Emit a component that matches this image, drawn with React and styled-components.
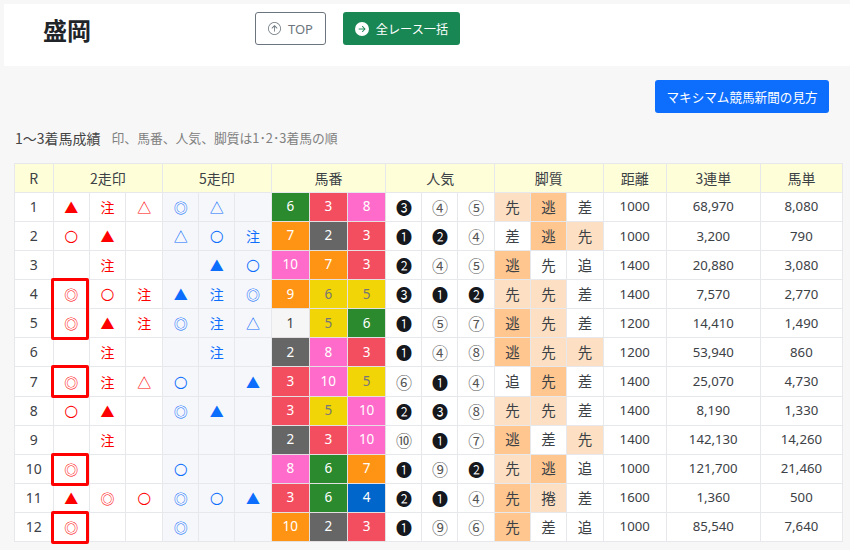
import React from "react";
import styled, { createGlobalStyle } from "styled-components";
import { BsArrowUpCircle, BsArrowRightCircleFill } from "react-icons/bs";

const Global = createGlobalStyle`
  html, body { margin: 0; padding: 0; background: #f7f7f7; }
  body { font-family: "Noto Sans", "Noto Sans CJK JP", sans-serif; color: #212529; }
`;

const Page = styled.div`
  width: 850px;
  height: 550px;
  padding-top: 4px;
  box-sizing: border-box;
  overflow: hidden;
`;

const Header = styled.header`
  margin-left: 4px;
  height: 62px;
  background: #fff;
  display: flex;
  align-items: flex-start;
`;

const Title = styled.h1`
  margin: 10px 0 0 39px;
  width: 212px;
  font: 700 24px/32px "Noto Sans CJK JP", sans-serif;
  color: #212529;
`;

const Button = styled.div`
  margin-top: 8px;
  height: 33px;
  box-sizing: border-box;
  display: flex;
  align-items: center;
  justify-content: center;
  border-radius: 3px;
  font-size: 13px;
`;

const TopButton = styled(Button)`
  width: 71px;
  gap: 7px;
  color: #6c757d;
  border: 1px solid #6c757d;
  background: #fff;
  margin-right: 17px;
`;

const GreenButton = styled(Button)`
  width: 117px;
  gap: 7px;
  color: #fff;
  background: #198754;
  font-size: 12.2px;
`;

const Toolbar = styled.div`
  display: flex;
  justify-content: flex-end;
  padding: 14px 21px 0 0;
`;

const BlueButton = styled(Button)`
  margin-top: 0;
  width: 174px;
  color: #fff;
  background: #0d6efd;
  font-size: 12.6px;
`;

const Caption = styled.p`
  margin: 15px 0 0 15px;
  height: 20px;
  font-family: "Noto Sans CJK JP", sans-serif;
  font-size: 14px;
  line-height: 20px;
  color: #444;
  display: flex;
  gap: 11px;
`;

const Note = styled.span`
  color: #808080;
  font-size: 12.8px;
`;

const Table = styled.table`
  margin: 15px 0 0 14px;
  width: 829px;
  table-layout: fixed;
  border-collapse: collapse;
  background: #fff;
  font-size: 13.2px;
  color: #3c4146;
  text-align: center;
`;

const Head = styled.th`
  height: 28px;
  padding: 0;
  background: #feffd9;
  border: 1px solid #e6e8ec;
  font-weight: 400;
  font-size: 14px;
  font-family: "Noto Sans CJK JP", sans-serif;
`;

const Row = styled.tr`
  height: 29.08px;
`;

const Cell = styled.td`
  padding: 0;
  border: 1px solid #e6e8ec;
  line-height: 1;
`;

const RaceCell = styled(Cell)`
  font-size: 14px;
`;

const MarkCell = styled(Cell)`
  position: relative;
  font-family: ${(p) => (p.$ring ? '"DejaVu Sans"' : '"Noto Sans CJK JP"')}, sans-serif;
  font-size: ${(p) => (p.$ring ? "16px" : "14px")};
  color: ${(p) => (p.$side === "b" ? "#0d6efd" : "#ff0000")};
  background: ${(p) => (p.$side === "b" ? "#f6f7fa" : "#fff")};
`;

const Highlight = styled.span`
  position: absolute;
  z-index: 2;
  left: -3px;
  right: 0;
  top: -2px;
  height: ${(p) => p.$rows * 29 + 4}px;
  box-sizing: border-box;
  border: 3px solid #f00;
  border-radius: 2px;
  pointer-events: none;
`;

const gate = {
  g: ["#2b8a2e", "#fff"],
  r: ["#f34e5f", "#fff"],
  p: ["#ff6bca", "#fff"],
  o: ["#ff9414", "#fff"],
  k: ["#666666", "#fff"],
  y: ["#f2d506", "#777"],
  b: ["#0066cc", "#fff"],
  w: ["#f6f6f6", "#444"],
};

const GateCell = styled(Cell)`
  background: ${(p) => gate[p.$c][0]};
  color: ${(p) => gate[p.$c][1]};
  border-color: #e4dfe0;
  font-size: 13.5px;
`;

const RankCell = styled(Cell)`
  font-family: "Noto Sans CJK JP", sans-serif;
  font-size: 16px;
  color: ${(p) => (p.$solid ? "#15181c" : "#555")};
`;

const StyleCell = styled(Cell)`
  font-family: "Noto Sans CJK JP", sans-serif;
  font-size: 14.5px;
  background: ${(p) => (p.$t === "d" ? "#ffc68f" : p.$t === "l" ? "#fde0c3" : "#fff")};
`;

const widths = [38.5, 36.5, 36, 37, 36, 36, 36.5, 38, 38, 38.5, 36, 36, 36.5, 36, 36, 36.5, 63, 94, 82];

const s = (str) => str.split(" ").map((v) => (v === "_" ? "" : v));

const rows = [
  ["▲ 注 △", "◎ △ _", "g6 r3 p8", "❸ ④ ⑤", "l先 d逃 n差", "1000", "68,970", "8,080"],
  ["○ ▲ _", "△ ○ 注", "o7 k2 r3", "❶ ❷ ④", "n差 d逃 l先", "1000", "3,200", "790"],
  ["_ 注 _", "_ ▲ ○", "p10 o7 r3", "❷ ④ ⑤", "d逃 n先 n追", "1400", "20,880", "3,080"],
  ["◎ ○ 注", "▲ 注 ◎", "o9 y6 y5", "❸ ❶ ❷", "l先 l先 n差", "1400", "7,570", "2,770", 2],
  ["◎ ▲ 注", "◎ 注 △", "w1 y5 g6", "❶ ⑤ ⑦", "d逃 l先 n差", "1200", "14,410", "1,490"],
  ["_ 注 _", "_ 注 _", "k2 p8 r3", "❶ ④ ⑧", "d逃 l先 l先", "1200", "53,940", "860"],
  ["◎ 注 △", "○ _ ▲", "r3 p10 y5", "⑥ ❶ ④", "n追 d先 n差", "1400", "25,070", "4,730", 1],
  ["○ ▲ _", "◎ ▲ _", "r3 y5 p10", "❷ ❸ ⑧", "l先 l先 n差", "1400", "8,190", "1,330"],
  ["_ 注 _", "_ _ _", "k2 r3 p10", "⑩ ❶ ⑦", "d逃 n差 l先", "1400", "142,130", "14,260"],
  ["◎ _ _", "○ _ _", "p8 g6 o7", "❶ ⑨ ❷", "l先 d逃 n追", "1000", "121,700", "21,460", 1],
  ["▲ ◎ ○", "◎ ○ ▲", "r3 g6 b4", "❷ ❶ ④", "d先 l捲 n差", "1600", "1,360", "500"],
  ["◎ _ _", "◎ _ _", "o10 k2 r3", "❶ ⑨ ⑥", "d先 n差 n追", "1000", "85,540", "7,640", 1],
];

export default function App() {
  return (
    <Page>
      <Global />
      <Header>
        <Title>盛岡</Title>
        <TopButton>
          <BsArrowUpCircle size={13} />
          TOP
        </TopButton>
        <GreenButton>
          <BsArrowRightCircleFill size={14} />
          全レース一括
        </GreenButton>
      </Header>
      <Toolbar>
        <BlueButton>マキシマム競馬新聞の見方</BlueButton>
      </Toolbar>
      <Caption>
        <span>1〜3着馬成績</span>
        <Note>印、馬番、人気、脚質は1･2･3着馬の順</Note>
      </Caption>
      <Table>
        <colgroup>
          {widths.map((w, i) => (
            <col key={i} width={w} />
          ))}
        </colgroup>
        <thead>
          <tr>
            <Head>R</Head>
            <Head colSpan={3}>2走印</Head>
            <Head colSpan={3}>5走印</Head>
            <Head colSpan={3}>馬番</Head>
            <Head colSpan={3}>人気</Head>
            <Head colSpan={3}>脚質</Head>
            <Head>距離</Head>
            <Head>3連単</Head>
            <Head>馬単</Head>
          </tr>
        </thead>
        <tbody>
          {rows.map((r, i) => (
            <Row key={i}>
              <RaceCell>{i + 1}</RaceCell>
              {s(r[0]).map((m, j) => (
                <MarkCell key={j} $ring={m === "○"}>
                  {m}
                  {j === 0 && r[8] ? <Highlight $rows={r[8]} /> : null}
                </MarkCell>
              ))}
              {s(r[1]).map((m, j) => (
                <MarkCell key={j} $side="b" $ring={m === "○"}>
                  {m}
                </MarkCell>
              ))}
              {s(r[2]).map((g, j) => (
                <GateCell key={j} $c={g[0]}>
                  {g.slice(1)}
                </GateCell>
              ))}
              {s(r[3]).map((p, j) => (
                <RankCell key={j} $solid={"❶❷❸".includes(p)}>
                  {p}
                </RankCell>
              ))}
              {s(r[4]).map((t, j) => (
                <StyleCell key={j} $t={t[0]}>
                  {t.slice(1)}
                </StyleCell>
              ))}
              <Cell>{r[5]}</Cell>
              <Cell>{r[6]}</Cell>
              <Cell>{r[7]}</Cell>
            </Row>
          ))}
        </tbody>
      </Table>
    </Page>
  );
}
